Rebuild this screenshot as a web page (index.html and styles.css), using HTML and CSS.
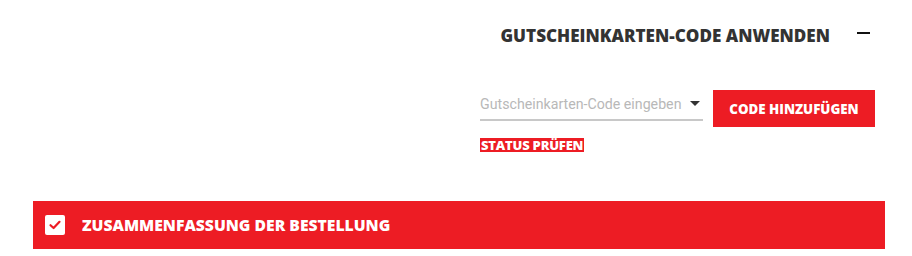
FILE: index.html
```html
<!DOCTYPE html>
<html lang="de">
<head>
  <meta charset="UTF-8">
  <meta name="viewport" content="width=device-width, initial-scale=1.0">
  <title>Gutschein</title>
  <link rel="stylesheet" href="styles.css">
</head>
<body>
<div class="page">
  <div class="giftcard">
    <div class="giftcard-head">
      <h3>Gutscheinkarten-Code anwenden</h3>
      <span class="toggle"></span>
    </div>
    <div class="giftcard-form">
      <div class="code-field">
        <input type="text" placeholder="Gutscheinkarten-Code eingeben">
        <span class="caret"></span>
      </div>
      <button class="btn-add">Code hinzufügen</button>
    </div>
    <div class="status-row">
      <a href="#" class="status-link">Status prüfen</a>
    </div>
  </div>

  <div class="summary-bar">
    <span class="check-box">
      <svg width="14" height="14" viewBox="0 0 14 14"><path d="M2.5 7.2 L5.6 10 L11.5 3.8" fill="none" stroke="#ed1c24" stroke-width="2.2" stroke-linecap="round" stroke-linejoin="round"/></svg>
    </span>
    <span class="summary-title">Zusammenfassung der Bestellung</span>
  </div>
</div>
</body>
</html>
```

FILE: styles.css
```css
body {
  margin: 0;
  padding: 0;
  background-color: #ffffff;
  font-family: "Open Sans", Arial, sans-serif;
}

.page {
  padding: 0 27px 0 33px;
}

.giftcard {
  display: flex;
  flex-direction: column;
  align-items: flex-end;
  padding-top: 20px;
}

.giftcard-head {
  display: flex;
  align-items: center;
  height: 30px;
  margin-right: 15px;
}

.giftcard-head h3 {
  margin: 0;
  font-size: 17.1px;
  font-weight: 800;
  text-transform: uppercase;
  color: #333333;
}

.toggle {
  width: 13px;
  height: 2px;
  background-color: #111111;
  margin-left: 27px;
  margin-top: -5px;
}

.giftcard-form {
  display: flex;
  align-items: stretch;
  margin-top: 40px;
  margin-right: 10px;
  align-self: flex-end;
}

.code-field {
  position: relative;
  width: 223px;
  border-bottom: 2px solid #c8c8c8;
  margin-bottom: 6px;
}

.code-field input {
  border: 0;
  outline: 0;
  width: 100%;
  box-sizing: border-box;
  padding: 0 20px 0 0;
  height: 27px;
  font-family: Roboto, Arial, sans-serif;
  font-size: 14.2px;
  background: transparent;
}

.code-field input::placeholder {
  color: #b8b8b8;
}

.caret {
  position: absolute;
  right: 3px;
  top: 11px;
  width: 0;
  height: 0;
  border-left: 5px solid transparent;
  border-right: 5px solid transparent;
  border-top: 5px solid #333333;
}

.btn-add {
  margin-left: 10px;
  width: 162px;
  height: 37px;
  border: 0;
  background-color: #ed1c24;
  color: #ffffff;
  font-family: "Open Sans", Arial, sans-serif;
  font-weight: 800;
  font-size: 13.3px;
  text-transform: uppercase;
  cursor: pointer;
}

.status-row {
  width: 395px;
  margin-right: 10px;
  margin-top: 6px;
}

.status-link {
  display: inline-block;
  background-color: #ed1c24;
  color: #ffffff;
  font-weight: 800;
  font-size: 13px;
  line-height: 14px;
  text-decoration: none;
  text-transform: uppercase;
  letter-spacing: -0.2px;
  padding: 0 1px;
}

.summary-bar {
  display: flex;
  align-items: center;
  margin-top: 46px;
  height: 48px;
  background-color: #ed1c24;
  padding-left: 12px;
}

.check-box {
  display: flex;
  align-items: center;
  justify-content: center;
  width: 20px;
  height: 20px;
  background-color: #ffffff;
  border-radius: 2px;
}

.summary-title {
  margin-left: 17px;
  color: #ffffff;
  font-size: 15.7px;
  font-weight: 800;
  text-transform: uppercase;
}
```
